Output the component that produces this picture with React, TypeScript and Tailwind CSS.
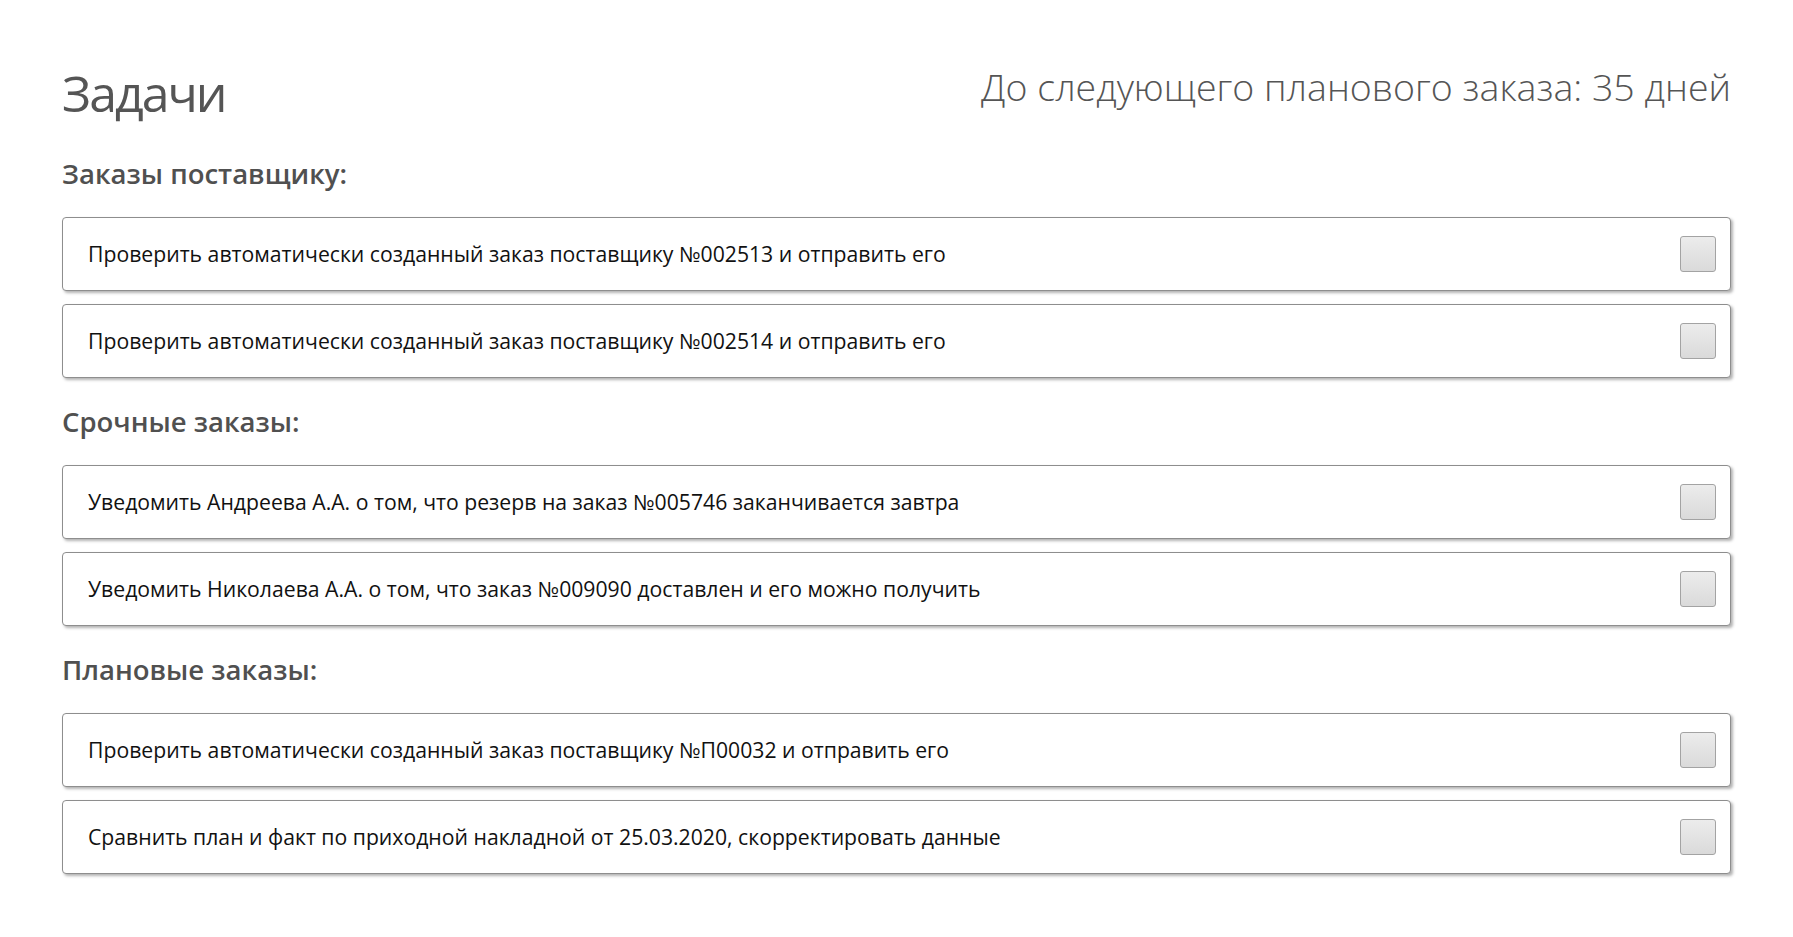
import React from 'react';

interface Task {
  id: string;
  text: string;
}

interface Section {
  title: string;
  tasks: Task[];
}

const sections: Section[] = [
  {
    title: 'Заказы поставщику:',
    tasks: [
      { id: 's1', text: 'Проверить автоматически созданный заказ поставщику №002513 и отправить его' },
      { id: 's2', text: 'Проверить автоматически созданный заказ поставщику №002514 и отправить его' },
    ],
  },
  {
    title: 'Срочные заказы:',
    tasks: [
      { id: 'u1', text: 'Уведомить Андреева А.А. о том, что резерв на заказ №005746 заканчивается завтра' },
      { id: 'u2', text: 'Уведомить Николаева А.А. о том, что заказ №009090 доставлен и его можно получить' },
    ],
  },
  {
    title: 'Плановые заказы:',
    tasks: [
      { id: 'p1', text: 'Проверить автоматически созданный заказ поставщику №П00032 и отправить его' },
      { id: 'p2', text: 'Сравнить план и факт по приходной накладной от 25.03.2020, скорректировать данные' },
    ],
  },
];

const TaskCard: React.FC<{ task: Task }> = ({ task }) => {
  const [done, setDone] = React.useState(false);
  return (
    <div className="h-[74px] flex items-center justify-between bg-white border border-[#8e8e8e] rounded-[4px] shadow-[2px_2px_3px_rgba(0,0,0,0.3)] pl-[25px] pr-[14px]">
      <span className="text-[21.2px] leading-none text-[#111]">{task.text}</span>
      <button
        type="button"
        onClick={() => setDone(!done)}
        className="w-[36px] h-[36px] rounded-[3px] border border-[#a3a3a3] bg-gradient-to-b from-[#ececec] to-[#dadada] flex items-center justify-center"
      >
        {done && (
          <svg width="22" height="22" viewBox="0 0 24 24" fill="none" stroke="#444" strokeWidth="3">
            <path d="M4 12l5 5L20 6" />
          </svg>
        )}
      </button>
    </div>
  );
};

export default function App() {
  return (
    <div className="min-h-screen bg-white px-[62px] pt-[64px] pb-10 font-['Open_Sans',sans-serif]">
      <div className="flex justify-between items-start">
        <h1 className="mt-[4px] text-[50px] leading-none tracking-[-2px] font-normal text-[#555]">Задачи</h1>
        <div className="mt-[4px] text-[37.5px] leading-none font-light text-[#555]">
          До следующего планового заказа: 35 дней
        </div>
      </div>

      <div className="mt-[42px] flex flex-col gap-[30px]">
        {sections.map((section) => (
          <section key={section.title}>
            <h2 className="text-[27.5px] leading-none font-semibold text-[#505050] mb-[29px]">{section.title}</h2>
            <div className="flex flex-col gap-[13.5px]">
              {section.tasks.map((task) => (
                <TaskCard key={task.id} task={task} />
              ))}
            </div>
          </section>
        ))}
      </div>
    </div>
  );
}
